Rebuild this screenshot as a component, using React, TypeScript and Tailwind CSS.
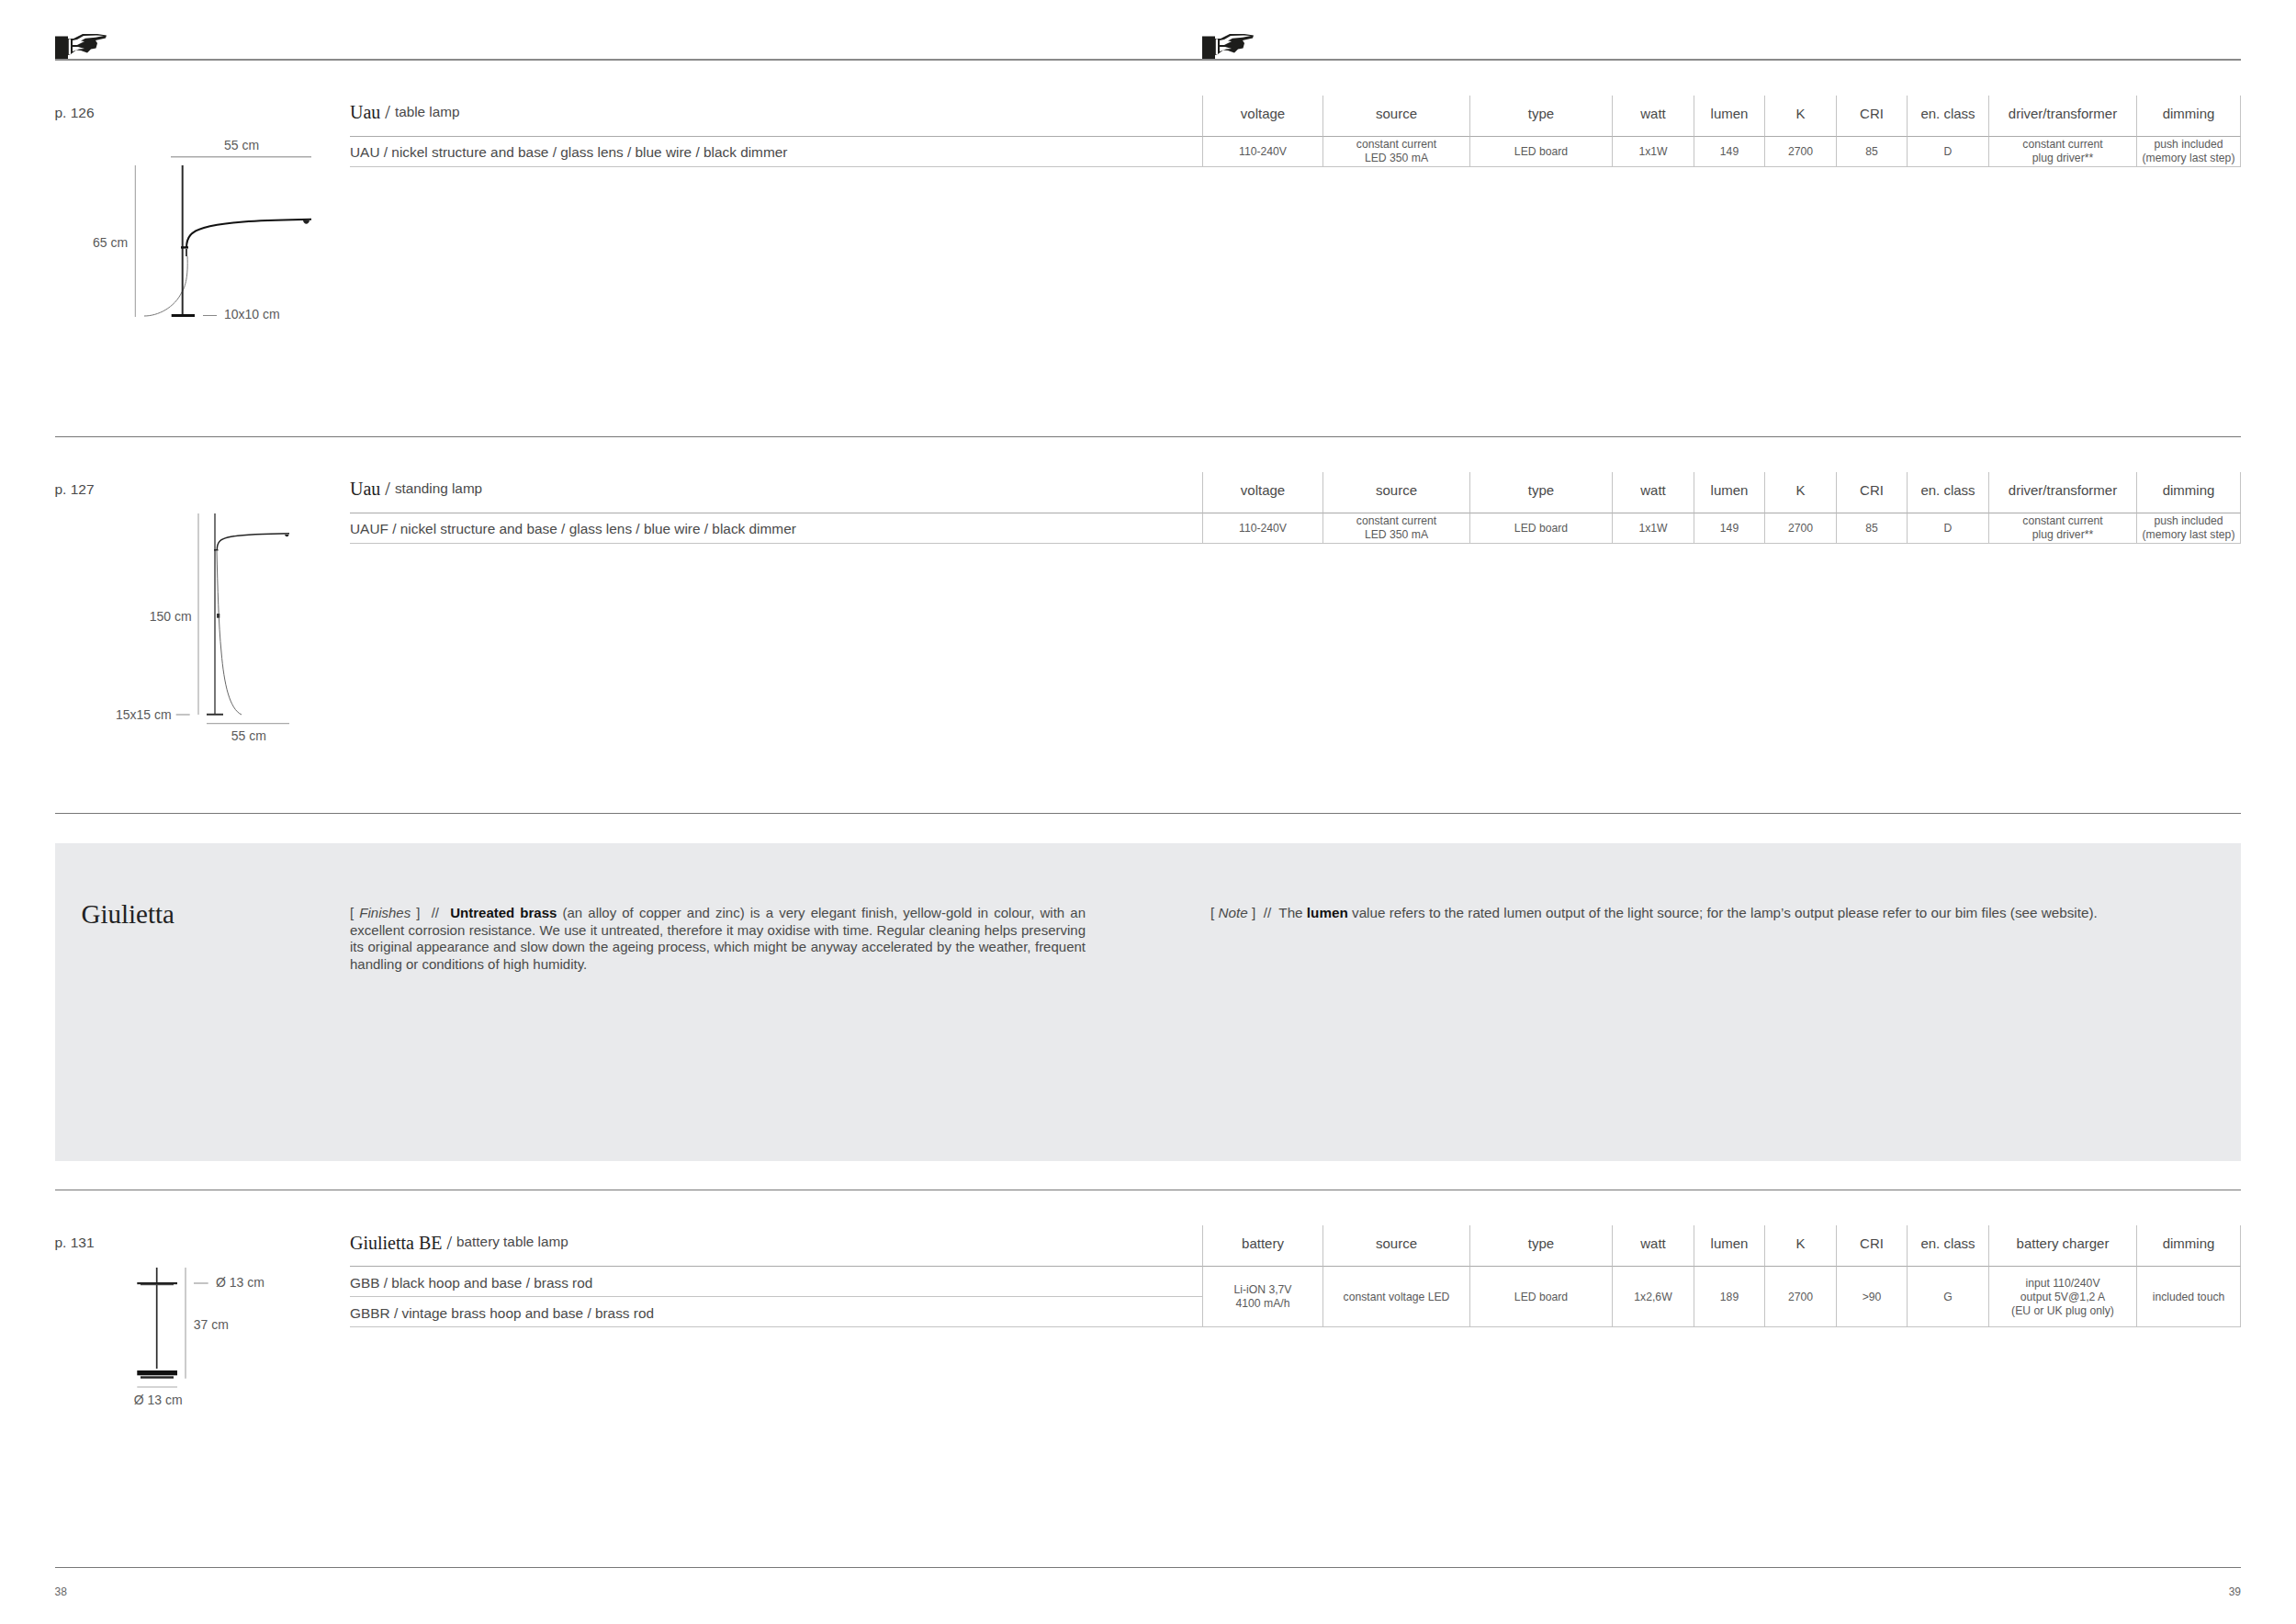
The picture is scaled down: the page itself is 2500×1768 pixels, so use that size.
const COL_CLASS =
  'grid grid-cols-[928px_131px_160px_155px_89px_77px_78px_77px_89px_161px_114px]';
const HEAD = 'flex items-center justify-center border-l-[1.5px] border-[#c4c4c4] pb-[4px] text-[15px] text-[#4a4a4a]';
const CELL = 'flex items-center justify-center border-l-[1.5px] border-[#c4c4c4] pt-[1px] text-center text-[12.2px] leading-[15px] text-[#5a5a5a]';
const NAME = 'flex items-center border-b-[1.5px] border-[#c4c4c4] pt-[3px] text-[15.4px] text-[#4a4a4a]';

function Hand() {
  return (
    <svg viewBox="0 0 56 28" className="block h-[28px] w-[56px]">
      <rect x="0" y="3.5" width="14" height="24.5" fill="#1d1d1b" />
      <path
        d="M14 6 L20 6 L30 1 L46 1 L56 2.5 L55 5.5 L46 7.5 L44 8 L46 11 L44.5 16.5 L39 17.5 L35 21.5 L28 19 L23 18.5 L17 23 L14 24 Z"
        fill="#1d1d1b"
      />
      <path d="M14.8 6.5 H17 V23 H14.8 Z" fill="#fff" />
      <path d="M19 8 L24 7 L31 3 L45 2.6 L53 3 L44 4.8 L33 5.8 L28 8.5 L32 9 L24 13 L19 13 Z" fill="#fff" />
      <path d="M19 15 L25 15 L32 17 L26 17.5 L19 20 Z" fill="#fff" />
    </svg>
  );
}

function Title({ name, kind }: { name: string; kind: string }) {
  return (
    <div className="flex items-center pb-[7px]">
      <span className="font-['Liberation_Serif',serif] text-[20px] text-[#222]">{name} /</span>
      <span className="ml-[5px] text-[15.3px] text-[#4a4a4a]">{kind}</span>
    </div>
  );
}

function SingleSpec(props: { name: string; kind: string; line: string; heads: string[]; cells: string[][] }) {
  return (
    <div className={COL_CLASS}>
      <div className="flex h-[44.5px] items-center border-b-[1.5px] border-[#aaa]">
        <Title name={props.name} kind={props.kind} />
      </div>
      {props.heads.map((h, i) => (
        <div key={h} className={`${HEAD} border-b-[1.5px] border-b-[#aaa] ${i === 9 ? 'border-r-[1.5px]' : ''}`}>
          {h}
        </div>
      ))}
      <div className={`${NAME} h-[33px]`}>{props.line}</div>
      {props.cells.map((lines, i) => (
        <div key={i} className={`${CELL} border-b-[1.5px] ${i === 9 ? 'border-r-[1.5px]' : ''}`}>
          <div>
            {lines.map((l) => (
              <div key={l}>{l}</div>
            ))}
          </div>
        </div>
      ))}
    </div>
  );
}

const LABEL = "fill-[#5a5a5a] text-[14px] font-['Liberation_Sans',sans-serif]";

function TableLamp() {
  return (
    <svg viewBox="60 130 321 230" className="mt-[9px] block h-[230px] w-[321px]">
      <text x="244" y="163" className={LABEL}>55 cm</text>
      <line x1="186" y1="170.7" x2="339" y2="170.7" stroke="#aaa" strokeWidth="1.5" />
      <line x1="147.3" y1="180" x2="147.3" y2="345" stroke="#999" strokeWidth="1" />
      <text x="101" y="269" className={LABEL}>65 cm</text>
      <path d="M204 279 C205 300 202 312 198 318 C190 335 172 344 157 344" fill="none" stroke="#777" strokeWidth="1" />
      <line x1="198.7" y1="180" x2="198.7" y2="344" stroke="#2a2a2a" strokeWidth="2" />
      <path d="M203 270 C203 258 208 252 222 248 C245 241 290 239.5 339 238.7" fill="none" stroke="#111" strokeWidth="2" />
      <path d="M330 240 H337 C336 245 331 245 330 240 Z" fill="#222" />
      <rect x="197" y="268.2" width="8" height="2.4" fill="#111" />
      <line x1="203" y1="271" x2="203" y2="279" stroke="#111" strokeWidth="1.6" />
      <rect x="186.7" y="342" width="25.3" height="3" fill="#111" />
      <line x1="221" y1="343.5" x2="236" y2="343.5" stroke="#888" strokeWidth="1" />
      <text x="244" y="347" className={LABEL}>10x10 cm</text>
    </svg>
  );
}

function StandingLamp() {
  return (
    <svg viewBox="60 540 321 280" className="mt-[9px] block h-[280px] w-[321px]">
      <line x1="216" y1="559" x2="216" y2="778" stroke="#aaa" strokeWidth="1.2" />
      <line x1="234" y1="559" x2="234" y2="778" stroke="#666" strokeWidth="1.8" />
      <path d="M236.3 598 C236.5 590 240 587 248 585 C262 581.5 290 581 315 580.7" fill="none" stroke="#222" strokeWidth="1.4" />
      <path d="M310 582 H314.5 C314 585 311 585 310 582 Z" fill="#222" />
      <rect x="233" y="598" width="4.5" height="1.6" fill="#222" />
      <path d="M236 600 C237 640 238 680 241 710 C244 745 250 772 263 778" fill="none" stroke="#666" strokeWidth="1" />
      <rect x="236" y="668" width="3.3" height="4.7" fill="#333" />
      <rect x="225" y="776.8" width="18" height="2" fill="#333" />
      <line x1="191.7" y1="778" x2="206.7" y2="778" stroke="#888" strokeWidth="1" />
      <line x1="225" y1="787.6" x2="315" y2="787.6" stroke="#aaa" strokeWidth="1.2" />
      <text x="162.7" y="676" className={LABEL}>150 cm</text>
      <text x="126" y="783" className={LABEL}>15x15 cm</text>
      <text x="251.7" y="806" className={LABEL}>55 cm</text>
    </svg>
  );
}

function BatteryLamp() {
  return (
    <svg viewBox="60 1360 321 190" className="mt-[8.5px] block h-[190px] w-[321px]">
      <line x1="170.7" y1="1380" x2="170.7" y2="1490" stroke="#2a2a2a" strokeWidth="1.7" />
      <rect x="149.3" y="1396" width="43.7" height="2.2" fill="#222" />
      <rect x="153" y="1398" width="36" height="1.2" fill="#444" />
      <rect x="149.3" y="1492" width="43.7" height="5.3" fill="#111" />
      <rect x="153" y="1498.3" width="36" height="2.4" fill="#222" />
      <line x1="202" y1="1380" x2="202" y2="1500.7" stroke="#aaa" strokeWidth="1.2" />
      <line x1="211" y1="1397" x2="226.7" y2="1397" stroke="#888" strokeWidth="1" />
      <line x1="149.3" y1="1510" x2="193" y2="1510" stroke="#aaa" strokeWidth="1.2" />
      <text x="235" y="1401" className={LABEL}>Ø 13 cm</text>
      <text x="210.7" y="1446.7" className={LABEL}>37 cm</text>
      <text x="145.7" y="1529" className={LABEL}>Ø 13 cm</text>
    </svg>
  );
}

const COMMON_HEADS = ['voltage', 'source', 'type', 'watt', 'lumen', 'K', 'CRI', 'en. class', 'driver/transformer', 'dimming'];
const UAU_CELLS = [
  ['110-240V'],
  ['constant current', 'LED 350 mA'],
  ['LED board'],
  ['1x1W'],
  ['149'],
  ['2700'],
  ['85'],
  ['D'],
  ['constant current', 'plug driver**'],
  ['push included', '(memory last step)'],
];

const BATTERY_HEADS = ['battery', 'source', 'type', 'watt', 'lumen', 'K', 'CRI', 'en. class', 'battery charger', 'dimming'];
const BATTERY_CELLS = [
  ['Li-iON 3,7V', '4100 mA/h'],
  ['constant voltage LED'],
  ['LED board'],
  ['1x2,6W'],
  ['189'],
  ['2700'],
  ['>90'],
  ['G'],
  ['input 110/240V', 'output 5V@1,2 A', '(EU or UK plug only)'],
  ['included touch'],
];

function BatterySpec() {
  return (
    <div className={`${COL_CLASS} grid-rows-[45px_33px_33px]`}>
      <div className="flex items-center border-b-[1.5px] border-[#aaa]">
        <Title name="Giulietta BE" kind="battery table lamp" />
      </div>
      {BATTERY_HEADS.map((h, i) => (
        <div key={h} className={`${HEAD} border-b-[1.5px] border-b-[#aaa] ${i === 9 ? 'border-r-[1.5px]' : ''}`}>
          {h}
        </div>
      ))}
      <div className={NAME}>GBB / black hoop and base / brass rod</div>
      {BATTERY_CELLS.map((lines, i) => (
        <div key={i} className={`${CELL} row-span-2 border-b-[1.5px] ${i === 9 ? 'border-r-[1.5px]' : ''}`}>
          <div>
            {lines.map((l) => (
              <div key={l}>{l}</div>
            ))}
          </div>
        </div>
      ))}
      <div className={NAME}>GBBR / vintage brass hoop and base / brass rod</div>
    </div>
  );
}

export default function App() {
  return (
    <div className="flex h-[1768px] w-[2500px] flex-col bg-white pl-[59.5px] pr-[60px] font-['Liberation_Sans',Arial,sans-serif]">
      {/* top rule with the two hands */}
      <div className="flex h-[66px] items-end border-b-2 border-[#8a8a8a]">
        <div className="w-[1249.5px]">
          <Hand />
        </div>
        <Hand />
      </div>

      <section className="flex h-[410px] border-b-[1.5px] border-[#777] pt-[38px]">
        <div className="w-[321.5px] shrink-0">
          <div className="text-[15.5px] leading-[38px] text-[#4a4a4a]">p. 126</div>
          <div className="mt-[-21px]">
            <TableLamp />
          </div>
        </div>
        <div>
          <SingleSpec
            name="Uau"
            kind="table lamp"
            line="UAU / nickel structure and base / glass lens / blue wire / black dimmer"
            heads={COMMON_HEADS}
            cells={UAU_CELLS}
          />
        </div>
      </section>

      <section className="flex h-[410px] border-b-[1.5px] border-[#777] pt-[38px]">
        <div className="w-[321.5px] shrink-0">
          <div className="text-[15.5px] leading-[38px] text-[#4a4a4a]">p. 127</div>
          <div className="mt-[-21px]">
            <StandingLamp />
          </div>
        </div>
        <div>
          <SingleSpec
            name="Uau"
            kind="standing lamp"
            line="UAUF / nickel structure and base / glass lens / blue wire / black dimmer"
            heads={COMMON_HEADS}
            cells={UAU_CELLS}
          />
        </div>
      </section>

      {/* finishes note */}
      <div className="mt-[32px] flex h-[346px] bg-[#e9eaec] pt-[61px]">
        <div className="w-[321.5px] shrink-0 pl-[29px] font-['Liberation_Serif',serif] text-[29px] leading-[32px] text-[#222]">Giulietta</div>
        <p className="mt-[6px] w-[801px] text-justify text-[15px] leading-[18.7px] text-[#4a4a4a]">
          [ <i>Finishes</i> ]&nbsp; //&nbsp; <b className="text-[#111]">Untreated brass</b> (an alloy of copper and zinc) is a very elegant finish, yellow-gold in colour, with an excellent corrosion resistance. We use it untreated, therefore it may oxidise with time. Regular cleaning helps preserving its original appearance and slow down the ageing process, which might be anyway accelerated by the weather, frequent handling or conditions of high humidity.
        </p>
        <p className="ml-[136px] mt-[6px] text-[15.25px] leading-[18.7px] text-[#4a4a4a]">
          [ <i>Note</i> ]&nbsp; //&nbsp; The <b className="text-[#111]">lumen</b> value refers to the rated lumen output of the light source; for the lamp’s output please refer to our bim files (see website).
        </p>
      </div>

      <section className="mt-[31px] flex h-[412px] border-y-[1.5px] border-[#777] pt-[38px]">
        <div className="w-[321.5px] shrink-0">
          <div className="text-[15.5px] leading-[38px] text-[#4a4a4a]">p. 131</div>
          <div className="mt-[-21px]">
            <BatteryLamp />
          </div>
        </div>
        <div>
          <BatterySpec />
        </div>
      </section>

      <div className="mt-[17px] flex justify-between text-[12px] text-[#666]">
        <span>38</span>
        <span>39</span>
      </div>
    </div>
  );
}
